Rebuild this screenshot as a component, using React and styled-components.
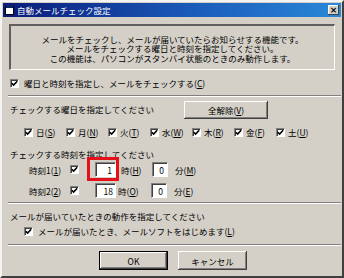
import React from "react";
import styled, { createGlobalStyle } from "styled-components";

const Global = createGlobalStyle`
  html, body { margin: 0; padding: 0; background: #d4d0c8; }
  body { font-family: "Noto Sans CJK JP", "Noto Sans", sans-serif; }
`;

const Window = styled.div`
  width: 344px;
  height: 278px;
  box-sizing: border-box;
  padding: 1px;
  background: #d4d0c8;
  border-style: solid;
  border-width: 2px;
  border-color: #f4f4f4 #404040 #404040 #f4f4f4;
  display: flex;
  flex-direction: column;
  font-size: 8.5px;
  color: #000;
`;

const TitleBar = styled.header`
  position: relative;
  z-index: 2;
  height: 14px;
  flex: none;
  display: flex;
  align-items: center;
  padding: 0 2px;
  background: linear-gradient(90deg, #0a1a78 0%, #1a5ab8 55%, #2a88d8 100%) #1a4aa8;
  color: #ffffff;
  gap: 3px;
`;

const TitleIcon = styled.span`
  width: 9px;
  height: 10px;
  flex: none;
  box-sizing: border-box;
  background: #fff;
  border: 1px solid #000;
  border-top: 3px solid #0a246a;
`;

const TitleText = styled.span`
  flex: 1;
  color: #ffffff;
  -webkit-text-fill-color: #ffffff;
  line-height: 14px;
`;

const CloseBtn = styled.span`
  width: 11px;
  height: 10px;
  background: #d4d0c8;
  color: #000;
  box-shadow: inset -1px -1px #404040, inset 1px 1px #fff;
  display: flex;
  align-items: center;
  justify-content: center;
  font-family: "DejaVu Sans", sans-serif;
  font-weight: bold;
  font-size: 9px;
  line-height: 10px;
`;

const Body = styled.div`
  padding: 7px 6px 0 6px;
  display: flex;
  flex-direction: column;
`;

const InfoBox = styled.div`
  height: 46px;
  box-sizing: border-box;
  border-top: 2px solid #606060;
  border-left: 2px solid #606060;
  border-right: 1px solid #fff;
  border-bottom: 1px solid #fff;
  padding-top: 9px;
  text-align: center;
  line-height: 9.3px;
`;

const Separator = styled.div`
  height: 1px;
  background: #808080;
  border-bottom: 1px solid #fff;
  margin: ${(p) => p.$top || 0}px -6px 0 -1px;
`;

const Row = styled.div`
  display: flex;
  align-items: center;
  height: ${(p) => p.$h || 12}px;
  margin-top: ${(p) => p.$top || 0}px;
  padding-left: ${(p) => p.$indent || 0}px;
  gap: ${(p) => p.$gap || 0}px;
`;

const Label = styled.span`
  white-space: nowrap;
  width: ${(p) => (p.$w ? p.$w + "px" : "auto")};
  flex: none;
  padding-bottom: ${(p) => p.$lift || 0}px;
  margin-left: ${(p) => p.$ml || 0}px;
`;

const Box = styled.span`
  width: 9px;
  height: 9px;
  box-sizing: border-box;
  flex: none;
  background: #fff;
  border-top: 1px solid #808080;
  border-left: 1px solid #808080;
  border-right: 1px solid #fff;
  border-bottom: 1px solid #fff;
  box-shadow: inset 1px 1px #404040;
  display: flex;
  align-items: center;
  justify-content: center;
`;

const Button = styled.div`
  width: ${(p) => p.$w}px;
  height: ${(p) => p.$h}px;
  box-sizing: border-box;
  display: flex;
  align-items: center;
  justify-content: center;
  background: #d4d0c8;
  border: ${(p) => (p.$primary ? "1px solid #000" : "none")};
  box-shadow: inset -1px -1px #404040, inset 1px 1px #fff, inset -2px -2px #808080;
`;

const DayItem = styled.div`
  width: 42px;
  display: flex;
  align-items: center;
  gap: 3px;
`;

const Field = styled.div`
  position: relative;
  width: ${(p) => p.$w}px;
  height: 15px;
  flex: none;
  box-sizing: border-box;
  background: #fff;
  border-top: 1px solid #808080;
  border-left: 1px solid #808080;
  border-right: 1px solid #fff;
  border-bottom: 1px solid #fff;
  box-shadow: inset 1px 1px #404040;
  display: flex;
  align-items: center;
  justify-content: flex-end;
  padding-right: ${(p) => p.$pr || 3}px;
  margin-left: ${(p) => p.$ml || 0}px;
`;

const Highlight = styled.div`
  position: absolute;
  left: -9px;
  right: -4px;
  top: -6px;
  bottom: -5px;
  border: 3px solid #e4101a;
`;

const ButtonRow = styled.div`
  display: flex;
  justify-content: center;
  gap: 10px;
  margin-top: 5px;
  margin-left: 2px;
`;

const Check = () => (
  <Box>
    <svg width="7" height="7" viewBox="0 0 7 7">
      <path d="M0.8 3.2 L2.6 5 L6.2 1.3" stroke="#000" strokeWidth="1.6" fill="none" />
    </svg>
  </Box>
);

const days = [
  ["日", "S"],
  ["月", "N"],
  ["火", "T"],
  ["水", "W"],
  ["木", "R"],
  ["金", "F"],
  ["土", "U"],
];

export default function App() {
  return (
    <>
      <Global />
      <Window>
        <TitleBar>
          <TitleIcon />
          <TitleText>自動メールチェック設定</TitleText>
          <CloseBtn>×</CloseBtn>
        </TitleBar>
        <Body>
          <InfoBox>
            メールをチェックし、メールが届いていたらお知らせする機能です。
            <br />
            メールをチェックする曜日と時刻を指定してください。
            <br />
            この機能は、パソコンがスタンバイ状態のときのみ動作します。
          </InfoBox>
          <Row $top={7} $indent={1} $gap={5}>
            <Check />
            <Label>
              曜日と時刻を指定し、メールをチェックする(<u>C</u>)
            </Label>
          </Row>
          <Separator $top={6} />
          <Row $top={4} $h={18} $indent={1}>
            <Label $w={174} $lift={3}>
              チェックする曜日を指定してください
            </Label>
            <Button $w={84} $h={18}>
              全解除(<u>V</u>)
            </Button>
          </Row>
          <Row $top={7} $indent={15}>
            {days.map(([d, k]) => (
              <DayItem key={k}>
                <Check />
                <Label>
                  {d}(<u>{k}</u>)
                </Label>
              </DayItem>
            ))}
          </Row>
          <Row $top={10} $indent={1}>
            <Label>チェックする時刻を指定してください</Label>
          </Row>
          <Row $top={2} $h={15} $indent={20}>
            <Label $w={41}>
              時刻1(<u>1</u>)
            </Label>
            <Check />
            <Field $w={21} $ml={16}>
              1<Highlight />
            </Field>
            <Label $w={31} $ml={5}>
              時(<u>H</u>)
            </Label>
            <Field $w={16}>0</Field>
            <Label $ml={7}>
              分(<u>M</u>)
            </Label>
          </Row>
          <Row $top={6} $h={15} $indent={20}>
            <Label $w={41}>
              時刻2(<u>2</u>)
            </Label>
            <Check />
            <Field $w={21} $ml={16} $pr={2}>
              18
            </Field>
            <Label $w={33} $ml={2}>
              時(<u>O</u>)
            </Label>
            <Field $w={16}>0</Field>
            <Label $ml={7}>
              分(<u>E</u>)
            </Label>
          </Row>
          <Separator $top={4} />
          <Row $top={6} $indent={1}>
            <Label>メールが届いていたときの動作を指定してください</Label>
          </Row>
          <Row $top={3} $indent={15} $gap={5}>
            <Check />
            <Label>
              メールが届いたとき、メールソフトをはじめます(<u>L</u>)
            </Label>
          </Row>
          <Separator $top={7} />
          <ButtonRow>
            <Button $w={69} $h={19} $primary>
              OK
            </Button>
            <Button $w={69} $h={19}>
              キャンセル
            </Button>
          </ButtonRow>
        </Body>
      </Window>
    </>
  );
}
